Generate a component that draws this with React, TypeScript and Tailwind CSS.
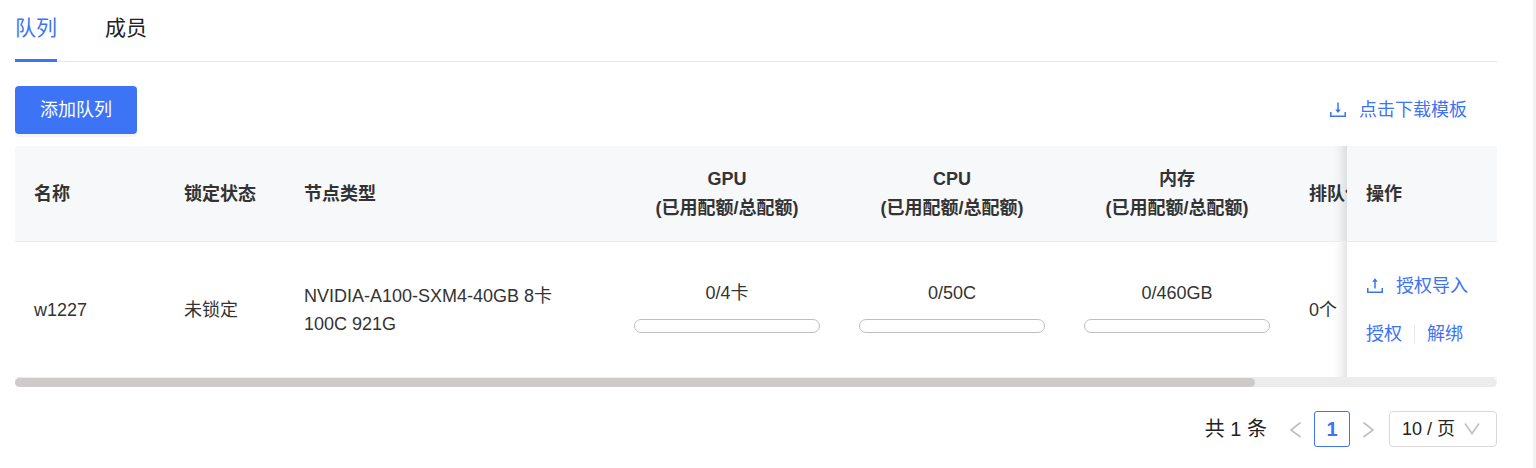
import { useRef, useState, type ReactNode } from "react";

const headCell = "h-24 border-b border-[#ececec] bg-[#f7f8fa] pt-px pr-5 pl-[19px] font-bold leading-[29px]";
const bodyCell = "h-[136px] border-b border-[#ececec] pr-5 pl-[19px] leading-7";
const pinned =
  "sticky right-0 before:pointer-events-none before:absolute before:inset-y-0 before:-left-[30px] before:w-[30px] before:shadow-[inset_-15px_0_12px_-12px_rgba(0,0,0,0.15)]";

const quotas = [
  { name: "GPU", text: "0/4卡", used: 0, total: 4 },
  { name: "CPU", text: "0/50C", used: 0, total: 50 },
  { name: "内存", text: "0/460GB", used: 0, total: 460 },
];

function TransferIcon({ upload = false }: { upload?: boolean }) {
  return (
    <svg viewBox="0 0 18 18" className="h-[18px] w-[18px] shrink-0" fill="none" stroke="currentColor" strokeWidth="1.5" aria-hidden="true">
      <path d="M1.75 11v4.25h14.5V11" />
      {upload ? (
        <>
          <path d="M9 3v8.5" />
          <path d="M9 1.2 11.8 4.8H6.2Z" fill="currentColor" stroke="none" />
        </>
      ) : (
        <>
          <path d="M9 1.5V10" />
          <path d="M9 12 6.2 8.4h5.6Z" fill="currentColor" stroke="none" />
        </>
      )}
    </svg>
  );
}

function Arrow({ d }: { d: string }) {
  return (
    <svg viewBox="0 0 18 18" className="h-[18px] w-[18px]" fill="none" stroke="currentColor" strokeWidth="1.6" aria-hidden="true">
      <path d={d} />
    </svg>
  );
}

function TabButton({ active, onClick, children }: { active: boolean; onClick: () => void; children: ReactNode }) {
  return (
    <button
      type="button"
      role="tab"
      aria-selected={active}
      onClick={onClick}
      className={
        active
          ? "-mb-px h-[62px] border-b-[3px] border-[#3d73f5] pb-1 text-[21px] text-[#3d73f5]"
          : "-mb-px h-[62px] border-b-[3px] border-transparent pb-1 text-[21px] text-[#222]"
      }
    >
      {children}
    </button>
  );
}

export default function App() {
  const [tab, setTab] = useState("队列");
  const [scroll, setScroll] = useState(0);
  const box = useRef<HTMLDivElement>(null);

  return (
    <main className="min-h-screen border-r-[3px] border-[#f0f0f5] bg-white pr-9 pl-[15px] font-['Liberation_Sans','Noto_Sans_CJK_SC',sans-serif] text-[18px] text-[#333]">
      <div role="tablist" className="flex gap-12 border-b border-[#e3e4ec]">
        {["队列", "成员"].map((name) => (
          <TabButton key={name} active={tab === name} onClick={() => setTab(name)}>
            {name}
          </TabButton>
        ))}
      </div>

      <div className="mt-6 flex items-center justify-between pr-[30px]">
        <button type="button" className="h-12 rounded bg-[#3d73f5] px-[25px] text-white shadow-[0_3px_0_rgba(0,0,0,0.04)]">
          添加队列
        </button>
        <a href="#template" className="flex items-center gap-3 text-[#3d73f5]">
          <TransferIcon />
          点击下载模板
        </a>
      </div>

      <div
        ref={box}
        onScroll={(e) => setScroll(e.currentTarget.scrollLeft / e.currentTarget.scrollWidth)}
        className="mt-3 overflow-x-auto rounded-tl [scrollbar-width:none]"
      >
        <table className="w-[1770px] table-fixed border-separate border-spacing-0 text-left">
          <colgroup>
            <col className="w-[150px]" />
            <col className="w-[120px]" />
            <col className="w-[330px]" />
            <col className="w-[225px]" />
            <col className="w-[225px]" />
            <col className="w-[225px]" />
            <col />
            <col className="w-[150px]" />
          </colgroup>
          <thead>
            <tr>
              <th className={headCell}>名称</th>
              <th className={headCell}>锁定状态</th>
              <th className={headCell}>节点类型</th>
              {quotas.map((q) => (
                <th key={q.name} className={`${headCell} text-center whitespace-nowrap`}>
                  {q.name}
                  <br />
                  (已用配额/总配额)
                </th>
              ))}
              <th className={headCell}>排队作业</th>
              <th className={`${headCell} ${pinned}`}>操作</th>
            </tr>
          </thead>
          <tbody>
            <tr>
              <td className={bodyCell}>w1227</td>
              <td className={bodyCell}>未锁定</td>
              <td className={bodyCell}>NVIDIA-A100-SXM4-40GB 8卡 100C 921G</td>
              {quotas.map((q) => (
                <td key={q.name} className={`${bodyCell} pb-2 text-center`}>
                  {q.text}
                  <div
                    role="progressbar"
                    aria-label={q.name}
                    aria-valuenow={q.used}
                    aria-valuemax={q.total}
                    className="mt-3 h-[14px] overflow-hidden rounded-full border border-[#bfbfbf]"
                  >
                    <div className="h-full bg-[#3d73f5]" style={{ width: `${(q.used / q.total) * 100}%` }} />
                  </div>
                </td>
              ))}
              <td className={bodyCell}>0个</td>
              <td className={`${bodyCell} ${pinned} bg-white text-[#3d73f5]`}>
                <button type="button" className="flex items-center gap-3 whitespace-nowrap">
                  <TransferIcon upload />
                  授权导入
                </button>
                <div className="mt-5 flex items-center">
                  <button type="button">授权</button>
                  <span className="mx-3 h-[18px] w-px bg-[#e8e8e8]" />
                  <button type="button">解绑</button>
                </div>
              </td>
            </tr>
          </tbody>
        </table>
      </div>
      <div
        className="h-[9px] rounded-full bg-[#ececec]"
        onClick={(e) => {
          const r = e.currentTarget.getBoundingClientRect();
          box.current?.scrollTo({ left: e.clientX - r.left > r.width / 2 ? 1770 : 0 });
        }}
      >
        <div className="h-full w-[83.7%] rounded-full bg-[#cecaca]" style={{ marginLeft: `${scroll * 100}%` }} />
      </div>

      <nav aria-label="分页" className="mt-6 flex h-9 items-center justify-end text-[#222]">
        <span className="mr-5 text-[20px]">共 1 条</span>
        <button type="button" disabled aria-label="上一页" className="text-[#bfbfbf]">
          <Arrow d="M13.5 2.5 4 10l9.5 7" />
        </button>
        <button type="button" aria-current="page" className="mx-[9px] h-9 w-9 rounded-[3px] border border-[#3d73f5] text-[20px] font-bold text-[#3d73f5]">
          1
        </button>
        <button type="button" disabled aria-label="下一页" className="text-[#bfbfbf]">
          <Arrow d="M4.5 2.5 14 10l-9.5 7" />
        </button>
        <div className="relative ml-3 h-9 w-[108px]">
          <select aria-label="每页条数" className="h-full w-full appearance-none rounded border border-[#d9d9d9] bg-white pl-3">
            <option>10 / 页</option>
            <option>20 / 页</option>
            <option>50 / 页</option>
          </select>
          <span className="pointer-events-none absolute top-[9px] right-4 text-[#bfbfbf]">
            <Arrow d="M2 3.5l7 10 7-10" />
          </span>
        </div>
      </nav>
    </main>
  );
}
